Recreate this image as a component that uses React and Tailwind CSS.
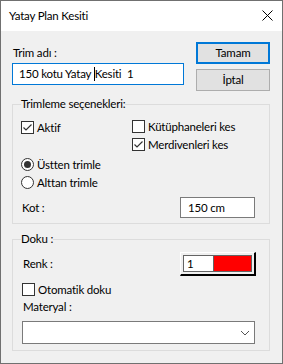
import React from 'react';

const font = { fontFamily: 'Lato, "Noto Sans", sans-serif' };

function Check({ checked }) {
  return (
    <span className="w-[13px] h-[13px] shrink-0 border border-[#333333] bg-white flex items-center justify-center">
      {checked && (
        <svg width="11" height="11" viewBox="0 0 11 11">
          <polyline points="1.5,5.5 4,8 9.5,2.5" fill="none" stroke="#333333" strokeWidth="1.2" />
        </svg>
      )}
    </span>
  );
}

function Radio({ checked }) {
  return (
    <span className="w-[13px] h-[13px] shrink-0 rounded-full border border-[#333333] bg-white flex items-center justify-center">
      {checked && <span className="w-[7px] h-[7px] rounded-full bg-[#333333]" />}
    </span>
  );
}

function Option({ type = 'check', checked, label }) {
  return (
    <div className="flex items-center h-[13px]">
      {type === 'check' ? <Check checked={checked} /> : <Radio checked={checked} />}
      <span className="ml-[3px] leading-[13px]">{label}</span>
    </div>
  );
}

export default function App() {
  return (
    <div
      className="w-[283px] h-[364px] border border-[#707070] bg-[#f0f0f0] text-[11.5px] tracking-[-0.2px] text-black flex flex-col overflow-hidden"
      style={font}
    >
      {/* title bar */}
      <div className="h-[30px] bg-white flex items-center pl-[8px] pr-[9px] shrink-0">
        <span className="flex-1">Yatay Plan Kesiti</span>
        <svg width="11" height="11" viewBox="0 0 11 11" className="mb-[1px]">
          <path d="M0.5 0.5 L10.5 10.5 M10.5 0.5 L0.5 10.5" stroke="#000" strokeWidth="1" />
        </svg>
      </div>

      <div className="pl-[11px] pr-[12px]">
        {/* name + buttons */}
        <div className="flex items-start">
          <div className="w-[172px] pt-[15px]">
            <div className="leading-[14px] pl-[1px]">Trim adı :</div>
            <div className="mt-[3px] h-[22px] border border-[#0078d7] bg-white flex items-center pl-[6px] leading-[14px] whitespace-pre">
              150 kotu Yatay <span className="inline-block w-px h-[14px] bg-black" />Kesiti  1
            </div>
          </div>
          <div className="ml-auto mt-[11px] w-[74px] flex flex-col gap-[5px]">
            <button className="h-[22px] border-2 border-[#0078d7] bg-[#e1e1e1] leading-[14px]">Tamam</button>
            <button className="h-[22px] border border-[#adadad] bg-[#e1e1e1] leading-[14px]">İptal</button>
          </div>
        </div>

        {/* trim options */}
        <fieldset className="mt-[6px] border border-[#dcdcdc] pl-[8px] pr-[14px] pb-[5px]">
          <legend className="leading-[14px] px-0">Trimleme seçenekleri:</legend>
          <div className="mt-[9px] flex">
            <div className="w-[111px] pt-px">
              <Option checked label="Aktif" />
            </div>
            <div className="flex flex-col gap-[5px]">
              <Option label="Kütüphaneleri kes" />
              <Option checked label="Merdivenleri kes" />
            </div>
          </div>
          <div className="mt-[7px] flex flex-col gap-[5px]">
            <Option type="radio" checked label="Üstten trimle" />
            <Option type="radio" label="Alttan trimle" />
          </div>
          <div className="mt-[8px] flex items-center">
            <span className="pl-[1px] leading-[14px]">Kot :</span>
            <div className="ml-auto w-[75px] h-[21px] border border-[#7a7a7a] bg-white flex items-center pl-[7px] leading-[14px]">
              150 cm
            </div>
          </div>
        </fieldset>

        {/* texture */}
        <fieldset className="mt-[8px] border border-[#dcdcdc] pl-[8px] pr-[14px] pb-[6px]">
          <legend className="leading-[14px] px-0">Doku :</legend>
          <div className="ml-[1px]">
            <div className="mt-[6px] flex items-center">
              <span className="pl-[1px] leading-[14px]">Renk :</span>
              <div className="ml-auto -mr-px w-[76px] h-[24px] border-t border-l border-white border-r-2 border-b-2 border-r-black border-b-black p-[2px]">
                <div className="h-full flex border border-[#646464]">
                  <div className="w-[30px] bg-white border-r border-[#646464] flex items-center pl-[3px] leading-[14px]">1</div>
                  <div className="flex-1 bg-[#ff0000]" />
                </div>
              </div>
            </div>
            <div className="mt-[7px]">
              <Option label="Otomatik doku" />
            </div>
            <div className="mt-[4px] pl-[1px] leading-[14px]">Materyal :</div>
            <div className="mt-[7px] h-[23px] border border-[#7a7a7a] bg-white flex items-center justify-end pr-[4px]">
              <svg width="10" height="6" viewBox="0 0 10 6">
                <polyline points="1,1 5,5 9,1" fill="none" stroke="#555" strokeWidth="1" />
              </svg>
            </div>
          </div>
        </fieldset>
      </div>
    </div>
  );
}
